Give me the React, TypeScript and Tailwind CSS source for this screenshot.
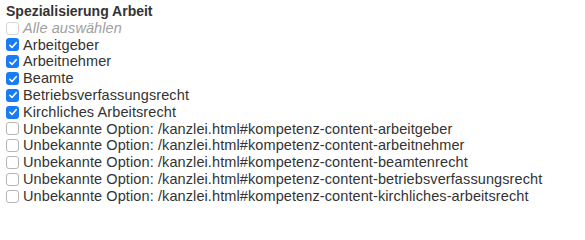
const options = [
  { label: "Arbeitgeber", checked: true },
  { label: "Arbeitnehmer", checked: true },
  { label: "Beamte", checked: true },
  { label: "Betriebsverfassungsrecht", checked: true },
  { label: "Kirchliches Arbeitsrecht", checked: true },
  { label: "Unbekannte Option: /kanzlei.html#kompetenz-content-arbeitgeber", checked: false },
  { label: "Unbekannte Option: /kanzlei.html#kompetenz-content-arbeitnehmer", checked: false },
  { label: "Unbekannte Option: /kanzlei.html#kompetenz-content-beamtenrecht", checked: false },
  { label: "Unbekannte Option: /kanzlei.html#kompetenz-content-betriebsverfassungsrecht", checked: false },
  { label: "Unbekannte Option: /kanzlei.html#kompetenz-content-kirchliches-arbeitsrecht", checked: false },
];

function Box({ checked, disabled }: { checked: boolean; disabled?: boolean }) {
  if (checked) {
    return (
      <span className="flex h-[13px] w-[13px] shrink-0 items-center justify-center rounded-[3px] bg-[#1a7cf5]">
        <svg viewBox="0 0 12 12" className="h-[10px] w-[10px]" fill="none">
          <path d="M2.2 6.3 L4.8 8.9 L9.8 3.2" stroke="white" strokeWidth="1.9" strokeLinecap="round" strokeLinejoin="round" />
        </svg>
      </span>
    );
  }
  return (
    <span
      className={`h-[13px] w-[13px] shrink-0 rounded-[3px] border bg-white ${
        disabled ? "border-[#d6d6d6]" : "border-[#b5b5b5]"
      }`}
    />
  );
}

export default function App() {
  return (
    <div className="bg-white pl-[6px] pt-[3px] text-[14.5px] leading-[16.8px] tracking-[0.1px] text-[#333] font-['Liberation_Sans',Arial,sans-serif]">
      <div className="text-[14px] font-bold tracking-normal">Spezialisierung Arbeit</div>

      <div className="flex items-center gap-[4px]">
        <Box checked={false} disabled />
        <span className="italic text-[#a0a0a0]">Alle auswählen</span>
      </div>

      {options.map((o) => (
        <div key={o.label} className="flex items-center gap-[4px]">
          <Box checked={o.checked} />
          <span>{o.label}</span>
        </div>
      ))}
    </div>
  );
}
